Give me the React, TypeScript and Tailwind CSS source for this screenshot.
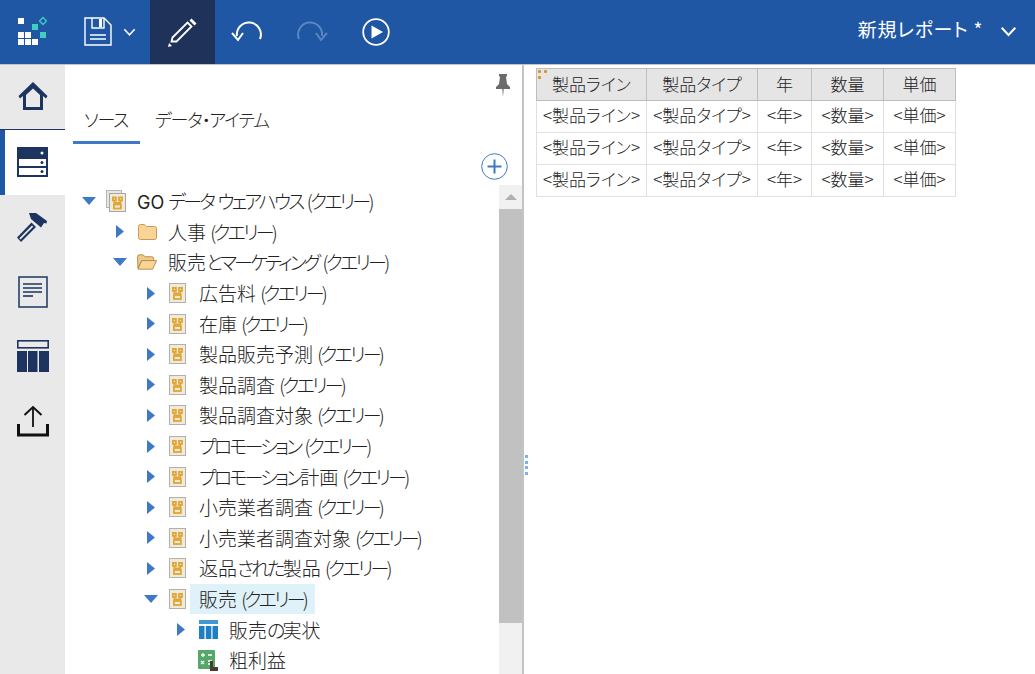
import type { FC, ReactNode } from "react";

const indent = ["pl-[16px]", "pl-[47px]", "pl-[78px]", "pl-[108px]"];

type Row = {
	label: string;
	depth: number;
	arrow?: "right" | "down";
	icon: "queryStack" | "query" | "folder" | "folderOpen" | "table" | "calc";
	selected?: boolean;
};

const rows: Row[] = [
	{ label: "GO データ ウェアハウス (クエリー)", depth: 0, arrow: "down", icon: "queryStack" },
	{ label: "人事 (クエリー)", depth: 1, arrow: "right", icon: "folder" },
	{ label: "販売とマーケティング (クエリー)", depth: 1, arrow: "down", icon: "folderOpen" },
	{ label: "広告料 (クエリー)", depth: 2, arrow: "right", icon: "query" },
	{ label: "在庫 (クエリー)", depth: 2, arrow: "right", icon: "query" },
	{ label: "製品販売予測 (クエリー)", depth: 2, arrow: "right", icon: "query" },
	{ label: "製品調査 (クエリー)", depth: 2, arrow: "right", icon: "query" },
	{ label: "製品調査対象 (クエリー)", depth: 2, arrow: "right", icon: "query" },
	{ label: "プロモーション (クエリー)", depth: 2, arrow: "right", icon: "query" },
	{ label: "プロモーション計画 (クエリー)", depth: 2, arrow: "right", icon: "query" },
	{ label: "小売業者調査 (クエリー)", depth: 2, arrow: "right", icon: "query" },
	{ label: "小売業者調査対象 (クエリー)", depth: 2, arrow: "right", icon: "query" },
	{ label: "返品された製品 (クエリー)", depth: 2, arrow: "right", icon: "query" },
	{ label: "販売 (クエリー)", depth: 2, arrow: "down", icon: "query", selected: true },
	{ label: "販売の実状", depth: 3, arrow: "right", icon: "table" },
	{ label: "粗利益", depth: 3, icon: "calc" },
];

const columns = [
	{ name: "製品ライン", width: "w-[110px]" },
	{ name: "製品タイプ", width: "w-[111px]" },
	{ name: "年", width: "w-[54px]" },
	{ name: "数量", width: "w-[72px]" },
	{ name: "単価", width: "w-[72px]" },
];

// kana in the shot is much narrower than the kanji, so runs get squeezed by letter spacing
const Squeezed: FC<{ text: string }> = ({ text }) => (
	<>
		{text.split(/([ぁ-んァ-ヶー・()]+|GO)/).map((part, i) => {
			if (part === "GO") {
				return (
					<span key={i} className="font-['Inter'] text-[18px] font-normal">
						{part}
					</span>
				);
			}
			if (/^[ぁ-んァ-ヶー・()]+$/.test(part)) {
				return (
					<span key={i} className="tracking-[-2.800px]">
						{part}
					</span>
				);
			}
			return <span key={i}>{part}</span>;
		})}
	</>
);

const Logo = () => (
	<svg width="32" height="32" viewBox="0 0 32 32">
		<g fill="#fff">
			<rect x="1" y="2" width="6" height="6" />
			<rect x="1" y="16" width="6" height="6" />
			<rect x="8" y="16" width="6" height="6" />
			<rect x="1" y="23" width="6" height="6" />
			<rect x="8" y="23" width="6" height="6" />
			<rect x="15" y="23" width="6" height="6" />
		</g>
		<rect x="15" y="8" width="6" height="6" fill="#3fd0c0" />
		<rect x="23" y="16" width="6" height="6" fill="#3fd0c0" />
		<path d="M26 1.5l3.5 3.5-3.5 3.5-3.500-3.500z" fill="none" stroke="#3fd0c0" strokeWidth="1.300" />
	</svg>
);

const SaveIcon = () => (
	<svg width="28" height="30" viewBox="0 0 28 30" fill="none" stroke="#fff">
		<path d="M1 1h19l7 7v20H1z" strokeWidth="1.400" />
		<path d="M8 1v10h12V1" strokeWidth="1.400" />
		<rect x="15" y="2" width="3" height="8" fill="#fff" stroke="none" />
		<path d="M6 18h16M6 22h16" strokeWidth="1.600" />
	</svg>
);

const PencilIcon = () => (
	<svg width="32" height="32" viewBox="0 0 32 32" fill="none">
		<path d="M5.500 22.500L20.500 7.500l4 4-15 15-5 0z" stroke="#fff" strokeWidth="1.800" transform="translate(0 -1)" />
		<path d="M22.500 4.500l2-2 5 5-2 2z" fill="#fff" />
		<path d="M1 31l1-4 3 3z" fill="#fff" />
	</svg>
);

const UndoIcon = ({ color }: { color: string }) => (
	<svg width="32" height="28" viewBox="0 0 32 28" fill="none" stroke={color} strokeWidth="2">
		<path d="M29 21a12 12 0 1 0-23-3" />
		<path d="M1 15l6 7 5-7" />
	</svg>
);

const RedoIcon = ({ color }: { color: string }) => (
	<svg width="32" height="28" viewBox="0 0 32 28" fill="none" stroke={color} strokeWidth="2">
		<path d="M3 21a12 12 0 1 1 23-3" />
		<path d="M31 15l-6 7-5-7" />
	</svg>
);

const PlayIcon = () => (
	<svg width="28" height="28" viewBox="0 0 28 28" fill="none">
		<circle cx="14" cy="14" r="12.800" stroke="#fff" strokeWidth="1.800" />
		<path d="M9.500 7.500L21 14 9.500 20.500z" fill="#fff" />
	</svg>
);

const Chevron = ({ size }: { size: number }) => (
	<svg width={size} height={size * 0.65} viewBox="0 0 20 13" fill="none" stroke="#fff" strokeWidth="2.400">
		<path d="M2 2l8 8.500L18 2" />
	</svg>
);

const HomeIcon = () => (
	<svg width="30" height="30" viewBox="0 0 30 30">
		<path d="M15 1L29.500 15l-1.500 2.500-3-2.500V29H5V15l-3 2.500L.5 15z" fill="#1c345f" />
		<path d="M15 7.500L22 14v12H8V14z" fill="#e9e9e9" />
	</svg>
);

const ServerIcon = () => (
	<svg width="31" height="30" viewBox="0 0 31 30">
		<rect width="31" height="30" fill="#1c345f" />
		<rect x="2" y="12" width="27" height="7" fill="#fff" />
		<rect x="2" y="21" width="27" height="7" fill="#fff" />
		<circle cx="25" cy="6" r="1.500" fill="#fff" />
		<circle cx="25" cy="15.500" r="1.500" fill="#1c345f" />
		<circle cx="25" cy="24.500" r="1.500" fill="#1c345f" />
	</svg>
);

const HammerIcon = () => (
	<svg width="31" height="29" viewBox="0 0 31 29">
		<path d="M12 0h7l11 8-.500 2.500-2.500-.5-3 4.500L14 6z" fill="#1c345f" />
		<path d="M14.500 9.500l4.500 4.500L4 29l-4-4.500z" fill="#1c345f" />
		<path d="M15 12.500l1.200 1.200L3.500 26.500l-1.200-1.200z" fill="#e9e9e9" />
	</svg>
);

const ReportIcon = () => (
	<svg width="30" height="32" viewBox="0 0 30 32" fill="none" stroke="#1c345f">
		<rect x="1" y="1" width="28" height="30" strokeWidth="1.500" />
		<path d="M5 8h19M5 12h19M5 16h19" strokeWidth="1.600" />
		<path d="M5 20h10" strokeWidth="1.600" />
	</svg>
);

const ColumnsIcon = () => (
	<svg width="32" height="32" viewBox="0 0 32 32">
		<rect x=".8" y=".8" width="30.400" height="7" fill="none" stroke="#1c345f" strokeWidth="1.600" />
		<rect y="11" width="10" height="21" fill="#1c345f" />
		<rect x="11" y="11" width="9.500" height="21" fill="#1c345f" />
		<rect x="22" y="11" width="10" height="21" fill="#1c345f" />
	</svg>
);

const UploadIcon = () => (
	<svg width="32" height="32" viewBox="0 0 32 32" fill="none" stroke="#111">
		<path d="M16 22V2" strokeWidth="1.800" />
		<path d="M7.500 10L16 2l8.500 8" strokeWidth="2" />
		<path d="M1.500 19v11h29V19" strokeWidth="3" />
	</svg>
);

const PinIcon = () => (
	<svg width="14" height="23" viewBox="0 0 14 23">
		<path d="M3 0h8v2l-1 1 1 7 3 3v2H0v-2l3-3 1-7-1-1z" fill="#6b6b6b" />
		<path d="M6 15h2l-1 8z" fill="#9a9a9a" />
	</svg>
);

const QueryGlyph = ({ x, y }: { x: number; y: number }) => (
	<g transform={`translate(${x} ${y})`} fill="none" stroke="#e0a535" strokeWidth="1.800">
		<rect x="0.900" y="0.900" width="3" height="3" />
		<rect x="7" y="0.900" width="3" height="3" />
		<path d="M2.400 4v2.500h6V4M5.400 6.500v1.500" />
		<rect x="1.900" y="8" width="7" height="4" />
	</g>
);

const TreeIcon = ({ type }: { type: Row["icon"] }) => {
	if (type === "queryStack") {
		return (
			<svg width="20" height="22" viewBox="0 0 20 22">
				<rect x="0.500" y="0.500" width="15" height="17" fill="#e6e6e6" stroke="#b5b5b5" />
				<rect x="3.500" y="3.500" width="16" height="18" fill="#f0ead9" stroke="#a5a5a5" />
				<QueryGlyph x={6} y={6.500} />
			</svg>
		);
	}
	if (type === "query") {
		return (
			<svg width="18" height="20" viewBox="0 0 18 20">
				<rect x="0.500" y="0.500" width="16" height="19" fill="#f0ead9" stroke="#b0b0b0" />
				<QueryGlyph x={3} y={4} />
			</svg>
		);
	}
	if (type === "folder") {
		return (
			<svg width="19" height="16" viewBox="0 0 19 16">
				<path d="M.5 2.500q0-2 2-2h4l2 2h8q2 0 2 2v9q0 2-2 2h-14q-2 0-2-2z" fill="#f8d597" stroke="#c99a56" />
			</svg>
		);
	}
	if (type === "folderOpen") {
		return (
			<svg width="21" height="16" viewBox="0 0 21 16">
				<path d="M.5 2.500q0-2 2-2h4l2 2h7q2 0 2 2v2H5l-4 8z" fill="#f0c98a" stroke="#b98a45" />
				<path d="M1 15.500L5 6.500h15.500l-4 9z" fill="#f8d597" stroke="#b98a45" />
			</svg>
		);
	}
	if (type === "table") {
		return (
			<svg width="19" height="19" viewBox="0 0 19 19">
				<rect width="19" height="4" fill="#3f97d6" />
				<rect y="6" width="5.500" height="13" fill="#1f7fc4" />
				<rect x="6.800" y="6" width="5.500" height="13" fill="#1f7fc4" />
				<rect x="13.500" y="6" width="5.500" height="13" fill="#1f7fc4" />
			</svg>
		);
	}
	return (
		<svg width="20" height="21" viewBox="0 0 20 21">
			<rect width="17" height="19" rx="1" fill="#55a868" />
			<path d="M3 5h4M5 3v4M10 5h4M3 11l3 3M6 11l-3 3M10 11h4M10 14h4" stroke="#fff" strokeWidth="1.300" fill="none" />
			<path d="M12 11h3v6h5v4h-8z" fill="#4a3b33" />
		</svg>
	);
};

const Arrow = ({ dir }: { dir?: "right" | "down" }) => {
	if (dir === "right") {
		return (
			<svg width="8" height="13" viewBox="0 0 8 13" className="ml-[4px]">
				<path d="M0 0l8 6.500L0 13z" fill="#3f78c4" />
			</svg>
		);
	}
	if (dir === "down") {
		return (
			<svg width="14" height="8" viewBox="0 0 14 8" className="ml-[1px]">
				<path d="M0 0h14L7 8z" fill="#3f78c4" />
			</svg>
		);
	}
	return null;
};

const TreeRow: FC<{ row: Row }> = ({ row }) => (
	<div className={`flex h-[30.6px] items-center ${indent[row.depth]}`}>
		<div className="flex w-4 items-center">
			<Arrow dir={row.arrow} />
		</div>
		<div className="ml-[9px] flex w-5 items-center justify-center">
			<TreeIcon type={row.icon} />
		</div>
		<span
			className={`ml-[2px] h-[30px] whitespace-nowrap px-[9px] leading-[30px] ${row.selected ? "bg-[#dff1f9]" : ""}`}
		>
			<Squeezed text={row.label} />
		</span>
	</div>
);

const NavItem: FC<{ active?: boolean; children: ReactNode }> = ({ active, children }) => (
	<div
		className={`flex items-center justify-center ${active ? "h-[65px] border-l-[5px] border-[#1f57a4] bg-white pb-[2px] pr-[5px]" : "h-[64.5px]"}`}
	>
		{children}
	</div>
);

export default function App() {
	return (
		<div className="flex h-[674px] w-[1035px] flex-col overflow-hidden bg-white font-['Noto_Sans_CJK_JP',sans-serif] text-[19px] font-light text-[#222] [font-feature-settings:'palt']">
			<header className="flex h-[64px] shrink-0 items-center bg-[#1f57a4] text-white">
				<div className="ml-[17px]">
					<Logo />
				</div>
				<div className="ml-[35px]">
					<SaveIcon />
				</div>
				<div className="ml-[11px]">
					<Chevron size={13} />
				</div>
				<div className="ml-[14px] flex h-full w-[65px] items-center justify-center bg-[#1f3259]">
					<PencilIcon />
				</div>
				<div className="ml-[16px]">
					<UndoIcon color="#fff" />
				</div>
				<div className="ml-[33px]">
					<RedoIcon color="#5c86c0" />
				</div>
				<div className="ml-[34px]">
					<PlayIcon />
				</div>
				<div className="ml-auto flex items-center pr-[18px]">
					<span className="pb-[6px] text-[19px] font-normal tracking-[.7px]">新規レポート *</span>
					<span className="ml-[17px]">
						<Chevron size={17} />
					</span>
				</div>
			</header>
			<div className="flex min-h-0 flex-1 border-t border-[#c4c4c4]">
				<nav className="w-[65px] shrink-0 bg-[#e9e9e9]">
					<div className="h-[65px] border-b border-[#1c345f] pb-[2px]">
						<div className="flex h-full items-center justify-center">
							<HomeIcon />
						</div>
					</div>
					<NavItem active>
						<ServerIcon />
					</NavItem>
					<NavItem>
						<HammerIcon />
					</NavItem>
					<NavItem>
						<ReportIcon />
					</NavItem>
					<NavItem>
						<ColumnsIcon />
					</NavItem>
					<NavItem>
						<UploadIcon />
					</NavItem>
				</nav>
				<section className="relative flex w-[459px] shrink-0 flex-col border-r-2 border-[#bfc4c4]">
					<div className="flex h-[32px] justify-end pr-[12px] pt-[9px]">
						<PinIcon />
					</div>
					<div className="ml-[8px] flex h-[47px] items-stretch">
						<div className="flex w-[67px] items-center justify-center border-b-[3px] border-[#3f78c4] pr-[1px] pt-[1px] text-[18px] tracking-[-1.200px]">
							ソース
						</div>
						<div className="ml-[15px] flex items-center pb-[2px] text-[18px] tracking-[-1.200px]">データ・アイテム</div>
					</div>
					<div className="flex h-[41px] justify-end pr-[14px] pt-[9px]">
						<svg width="27" height="27" viewBox="0 0 27 27" fill="none" stroke="#3f78c4">
							<circle cx="13.500" cy="13.500" r="12.800" />
							<path d="M6.500 13.500h14M13.500 6.500v14" strokeWidth="2" />
						</svg>
					</div>
					<div className="flex min-h-0 flex-1">
						<div className="min-w-0 flex-1 overflow-hidden pt-[1px]">
							{rows.map((row) => (
								<TreeRow key={row.label} row={row} />
							))}
						</div>
						<div className="flex w-[23px] shrink-0 flex-col bg-[#f1f1f1]">
							<div className="flex h-[24px] items-center justify-center">
								<div className="h-0 w-0 border-x-[6px] border-b-[6px] border-x-transparent border-b-[#b0b0b0]" />
							</div>
							<div className="h-[414px] bg-[#c1c1c1]" />
						</div>
					</div>
					<div className="absolute right-[-6px] top-[390px] flex flex-col gap-[2.500px]">
						<div className="h-[3px] w-[3px] bg-[#7fb0ee]" />
						<div className="h-[3px] w-[3px] bg-[#7fb0ee]" />
						<div className="h-[3px] w-[3px] bg-[#7fb0ee]" />
						<div className="h-[3px] w-[3px] bg-[#7fb0ee]" />
					</div>
				</section>
				<main className="min-w-0 flex-1 pl-[12px] pt-[3px]">
					<div className="relative w-fit">
						<svg width="12" height="12" viewBox="0 0 12 12" className="absolute left-[2px] top-[2px]">
							<g fill="#d8962a">
								<rect x="0" y="0" width="3" height="3" rx="1" />
								<rect x="6" y="0" width="3" height="3" rx="1" />
								<rect x="0" y="6" width="3" height="3" rx="1" />
							</g>
						</svg>
						<table className="table-fixed border-collapse text-center text-[17px]">
							<thead>
								<tr className="h-[32px]">
									{columns.map((col) => (
										<th
											key={col.name}
											className={`${col.width} border border-[#bdbdbd] bg-[#e6e5e5] p-0 pb-[2px] font-light`}
										>
											{col.name}
										</th>
									))}
								</tr>
							</thead>
							<tbody>
								{[0, 1, 2].map((i) => (
									<tr key={i} className="h-[32px]">
										{columns.map((col) => (
											<td
												key={col.name}
												className="h-[32px] whitespace-nowrap border border-[#e0e0e0] p-0 pb-[3px] leading-[26px]"
											>
												{`<${col.name}>`}
											</td>
										))}
									</tr>
								))}
							</tbody>
						</table>
					</div>
				</main>
			</div>
		</div>
	);
}
